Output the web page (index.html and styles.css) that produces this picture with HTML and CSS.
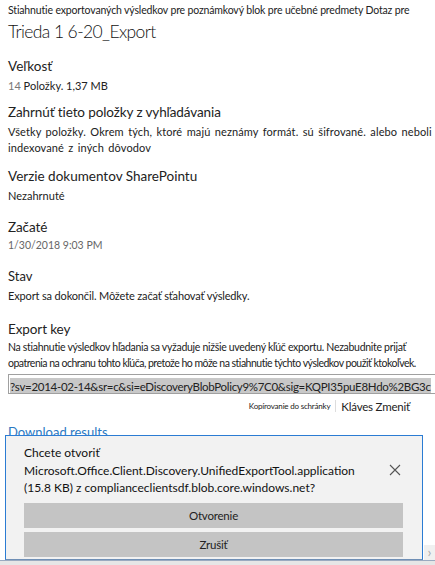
FILE: index.html
```html
<!DOCTYPE html>
<html lang="sk">
<head>
    <meta charset="UTF-8">
    <meta name="viewport" content="width=device-width, initial-scale=1.0">
    <title>Export</title>
    <link rel="stylesheet" href="styles.css">
</head>
<body>
    <div class="panel">
        <!-- Header -->
        <p class="intro">Stiahnutie exportovaných výsledkov pre poznámkový blok pre učebné predmety Dotaz pre</p>
        <h1>Trieda 1 6-20_Export</h1>

        <!-- Details -->
        <section class="field field-size">
            <h2 class="label-md">Veľkosť</h2>
            <p class="value"><span class="muted">14</span> Položky. 1,37 MB</p>
        </section>
        <section class="field field-include">
            <h2 class="label-lg">Zahrnúť tieto položky z vyhľadávania</h2>
            <p class="value wide-note">Všetky položky. Okrem tých, ktoré majú neznámy formát. sú šifrované. alebo neboli<br>indexované z iných dôvodov</p>
        </section>
        <section class="field field-versions">
            <h2 class="label-md">Verzie dokumentov SharePointu</h2>
            <p class="value">Nezahrnuté</p>
        </section>
        <section class="field field-start">
            <h2 class="label-lg">Začaté</h2>
            <p class="value date">1/30/2018 9:03 PM</p>
        </section>
        <section class="field field-state">
            <h2 class="label-sm">Stav</h2>
            <p class="value">Export sa dokončil. Môžete začať sťahovať výsledky.</p>
        </section>
        <section class="field field-key">
            <h2 class="label-lg">Export key</h2>
            <p class="value key-note">Na stiahnutie výsledkov hľadania sa vyžaduje nižšie uvedený kľúč exportu. Nezabudnite prijať<br><span class="tight">opatrenia na ochranu tohto kľúča, pretože ho môže na stiahnutie týchto výsledkov použiť ktokoľvek.</span></p>
            <div class="key-box"><span class="key-text">?sv=2014-02-14&amp;sr=c&amp;si=eDiscoveryBlobPolicy9%7C0&amp;sig=KQPI35puE8Hdo%2BG3c</span></div>
            <div class="key-actions">
                <a class="copy-link">Kopírovanie do schránky</a>
                <span class="divider"></span>
                <a class="change-link">Kláves Zmeniť</a>
            </div>
        </section>
        <a class="download-link">Download results</a>
    </div>

    <!-- Browser download prompt -->
    <div class="prompt">
        <div class="prompt-row">
            <p class="prompt-text">Chcete otvoriť<br>Microsoft.Office.Client.Discovery.UnifiedExportTool.application<br>(15.8 KB) z complianceclientsdf.blob.core.windows.net?</p>
            <svg class="prompt-close" width="12" height="12" viewBox="0 0 12 12">
                <path d="M1 1 L11 11 M11 1 L1 11" stroke="#555" stroke-width="1.1" fill="none"/>
            </svg>
        </div>
        <button class="prompt-btn">Otvorenie</button>
        <button class="prompt-btn">Zrušiť</button>
    </div>
    <div class="scroll-arrow">›</div>
    <div class="bottom-bar"></div>
</body>
</html>
```

FILE: styles.css
```css
/* Global Styling */
html, body {
    margin: 0;
    padding: 0;
    height: 565px;
    overflow: hidden;
}
body {
    font-family: Lato, "Noto Sans", sans-serif;
    background-color: #fff;
    color: #222;
    position: relative;
}
p, h1, h2 {
    margin: 0;
    font-weight: normal;
}
.panel {
    padding: 2px 8px 0 8px;
}
.intro {
    font-size: 10.5px;
    line-height: 16px;
    letter-spacing: -0.15px;
    white-space: nowrap;
}
h1 {
    font-size: 17.5px;
    font-weight: 300;
    line-height: 24px;
    margin-top: 2px;
    letter-spacing: -0.6px;
    color: #111;
}

/* Detail fields */
.field-size { margin-top: 12px; }
.field-include { margin-top: 8px; }
.field-versions { margin-top: 10px; }
.field-start { margin-top: 13px; }
.field-state { margin-top: 14px; }
.field-key { margin-top: 15px; }

.label-lg {
    font-size: 13.5px;
    line-height: 20px;
    letter-spacing: -0.1px;
}
.label-md {
    font-size: 13.5px;
    line-height: 20px;
}
.label-sm {
    font-size: 13px;
    line-height: 18px;
}
.value {
    font-size: 11px;
    line-height: 16px;
    margin-top: 2px;
    white-space: nowrap;
}
.wide-note {
    word-spacing: 1.5px;
    letter-spacing: 0.1px;
}
.field-start .value,
.key-note {
    margin-top: 0;
}
.key-note {
    font-size: 10.5px;
    letter-spacing: -0.3px;
}
.tight {
    letter-spacing: -0.5px;
}
.field-state .value {
    margin-top: 3px;
    letter-spacing: -0.15px;
}
.muted {
    color: #777;
}
.date {
    font-size: 10.5px;
    color: #666;
}

/* Export key */
.key-box {
    margin-top: 3px;
    border: 1px solid #a0a0a0;
    border-right: none;
    height: 18px;
    padding: 0 0 0 1px;
    overflow: hidden;
    white-space: nowrap;
    margin-right: -8px;
}
.key-text {
    background-color: #c8c8c8;
    font-size: 11.5px;
    letter-spacing: -0.3px;
    line-height: 17px;
    margin-top: 1px;
    display: inline-block;
}
.key-actions {
    display: flex;
    justify-content: flex-end;
    align-items: center;
    gap: 5px;
    margin-top: 5px;
    padding-right: 17px;
    height: 14px;
}
.copy-link {
    font-size: 8px;
    letter-spacing: -0.2px;
}
.divider {
    width: 1px;
    height: 12px;
    background-color: #ddd;
}
.change-link {
    font-size: 11.5px;
    letter-spacing: -0.2px;
}
.download-link {
    display: block;
    color: #2b79c2;
    font-size: 13px;
    line-height: 20px;
    margin-top: 9px;
}

/* Download prompt */
.prompt {
    position: absolute;
    left: 5px;
    top: 435px;
    width: 418px;
    height: 125px;
    background-color: #f2f2f2;
    border: 1px solid #2b7cd3;
    border-bottom: 1px solid #6f8fb5;
    padding: 0 19px 0 18px;
    box-sizing: border-box;
}
.prompt-row {
    display: flex;
    align-items: center;
    justify-content: space-between;
    padding: 8px 0 6px 0;
}
.prompt-text {
    font-size: 12px;
    line-height: 17.5px;
    color: #111;
    white-space: nowrap;
}
.prompt-close {
    margin-right: 2px;
}
.prompt-btn {
    display: block;
    width: 100%;
    height: 25px;
    border: none;
    background-color: #c4c4c4;
    font-family: inherit;
    font-size: 11.5px;
    letter-spacing: -0.2px;
    color: #222;
    margin-bottom: 4px;
    padding: 0;
}
.scroll-arrow {
    position: absolute;
    right: 0;
    top: 545px;
    width: 11px;
    height: 15px;
    font-size: 14px;
    line-height: 14px;
    color: #aaa;
    text-align: center;
    background-color: #f0f0f0;
}
.bottom-bar {
    position: absolute;
    left: 0;
    right: 0;
    top: 560px;
    height: 5px;
    background-color: #e6e6e6;
    border-top: 1px solid #9aaac0;
}
```
